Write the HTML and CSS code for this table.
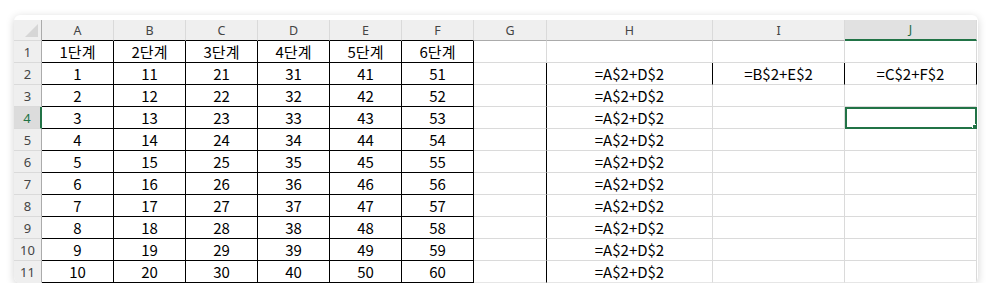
FILE: index.html
```html
<!DOCTYPE html>
<html lang="ko">
<head>
  <meta charset="UTF-8">
  <title>Sheet</title>
  <link rel="stylesheet" href="styles.css">
</head>
<body>
  <div class="sheet">
    <div class="row head">
      <div class="corner"><span class="tri"></span></div>
      <div class="ch bk">A</div>
      <div class="ch bk">B</div>
      <div class="ch bk">C</div>
      <div class="ch bk">D</div>
      <div class="ch bk">E</div>
      <div class="ch bk">F</div>
      <div class="ch">G</div>
      <div class="ch">H</div>
      <div class="ch">I</div>
      <div class="ch sel">J</div>
    </div>

    <div class="row">
      <div class="rh">1</div>
      <div class="c b">1단계</div>
      <div class="c b">2단계</div>
      <div class="c b">3단계</div>
      <div class="c b">4단계</div>
      <div class="c b">5단계</div>
      <div class="c b">6단계</div>
      <div class="c"></div>
      <div class="c"></div>
      <div class="c"></div>
      <div class="c"></div>
    </div>

    <div class="row">
      <div class="rh">2</div>
      <div class="c b">1</div>
      <div class="c b">11</div>
      <div class="c b">21</div>
      <div class="c b">31</div>
      <div class="c b">41</div>
      <div class="c b">51</div>
      <div class="c br"></div>
      <div class="c br">=A$2+D$2</div>
      <div class="c br">=B$2+E$2</div>
      <div class="c br">=C$2+F$2</div>
    </div>

    <div class="row">
      <div class="rh">3</div>
      <div class="c b">2</div>
      <div class="c b">12</div>
      <div class="c b">22</div>
      <div class="c b">32</div>
      <div class="c b">42</div>
      <div class="c b">52</div>
      <div class="c br"></div>
      <div class="c">=A$2+D$2</div>
      <div class="c"></div>
      <div class="c"></div>
    </div>

    <div class="row">
      <div class="rh cur">4</div>
      <div class="c b">3</div>
      <div class="c b">13</div>
      <div class="c b">23</div>
      <div class="c b">33</div>
      <div class="c b">43</div>
      <div class="c b">53</div>
      <div class="c br"></div>
      <div class="c">=A$2+D$2</div>
      <div class="c"></div>
      <div class="c active"></div>
    </div>

    <div class="row">
      <div class="rh">5</div>
      <div class="c b">4</div>
      <div class="c b">14</div>
      <div class="c b">24</div>
      <div class="c b">34</div>
      <div class="c b">44</div>
      <div class="c b">54</div>
      <div class="c br"></div>
      <div class="c">=A$2+D$2</div>
      <div class="c"></div>
      <div class="c"></div>
    </div>

    <div class="row">
      <div class="rh">6</div>
      <div class="c b">5</div>
      <div class="c b">15</div>
      <div class="c b">25</div>
      <div class="c b">35</div>
      <div class="c b">45</div>
      <div class="c b">55</div>
      <div class="c br"></div>
      <div class="c">=A$2+D$2</div>
      <div class="c"></div>
      <div class="c"></div>
    </div>

    <div class="row">
      <div class="rh">7</div>
      <div class="c b">6</div>
      <div class="c b">16</div>
      <div class="c b">26</div>
      <div class="c b">36</div>
      <div class="c b">46</div>
      <div class="c b">56</div>
      <div class="c br"></div>
      <div class="c">=A$2+D$2</div>
      <div class="c"></div>
      <div class="c"></div>
    </div>

    <div class="row">
      <div class="rh">8</div>
      <div class="c b">7</div>
      <div class="c b">17</div>
      <div class="c b">27</div>
      <div class="c b">37</div>
      <div class="c b">47</div>
      <div class="c b">57</div>
      <div class="c br"></div>
      <div class="c">=A$2+D$2</div>
      <div class="c"></div>
      <div class="c"></div>
    </div>

    <div class="row">
      <div class="rh">9</div>
      <div class="c b">8</div>
      <div class="c b">18</div>
      <div class="c b">28</div>
      <div class="c b">38</div>
      <div class="c b">48</div>
      <div class="c b">58</div>
      <div class="c br"></div>
      <div class="c">=A$2+D$2</div>
      <div class="c"></div>
      <div class="c"></div>
    </div>

    <div class="row">
      <div class="rh">10</div>
      <div class="c b">9</div>
      <div class="c b">19</div>
      <div class="c b">29</div>
      <div class="c b">39</div>
      <div class="c b">49</div>
      <div class="c b">59</div>
      <div class="c br"></div>
      <div class="c">=A$2+D$2</div>
      <div class="c"></div>
      <div class="c"></div>
    </div>

    <div class="row last">
      <div class="rh">11</div>
      <div class="c b">10</div>
      <div class="c b">20</div>
      <div class="c b">30</div>
      <div class="c b">40</div>
      <div class="c b">50</div>
      <div class="c b">60</div>
      <div class="c br"></div>
      <div class="c">=A$2+D$2</div>
      <div class="c"></div>
      <div class="c"></div>
    </div>
  </div>
</body>
</html>
```

FILE: styles.css
```css
body {
  margin: 0;
  padding: 15px 0 0 14px;
  background: #fff;
  font-family: "Noto Sans CJK KR", "Noto Sans", sans-serif;
}

.sheet {
  width: 964px;
  padding-top: 5px;
  background: #fff;
  border-radius: 6px;
  overflow: hidden;
  box-shadow: 0 2px 8px rgba(0, 0, 0, 0.18);
}

.row {
  display: grid;
  grid-template-columns: 28px repeat(6, 72px) 73px 166px 132px 132px;
  height: 22px;
}

.row.head {
  height: 21px;
}

.row > div {
  box-sizing: border-box;
  border-right: 1px solid #dadada;
  border-bottom: 1px solid #dadada;
  display: flex;
  align-items: center;
  justify-content: center;
  overflow: hidden;
  white-space: nowrap;
}

/* headers */
.corner,
.ch,
.rh {
  background: #efefef;
  color: #454545;
  font-family: "Noto Sans", sans-serif;
  font-size: 12.5px;
}

.ch {
  border-bottom-color: #ababab !important;
}

.ch.bk {
  border-bottom-color: #000 !important;
}

.ch.sel {
  background: #e1e1e1;
  color: #1e6b41;
  border-bottom: 2px solid #217346 !important;
}

.rh,
.corner {
  border-right-color: #ababab !important;
}

.rh {
  font-size: 13px;
  padding-top: 1px;
}

.rh.cur {
  background: #dcdcdc;
  color: #217346;
  border-right: 2px solid #217346 !important;
}

.last .rh {
  border-bottom-color: #efefef;
}

.corner {
  position: relative;
}

.tri {
  position: absolute;
  right: 3px;
  bottom: 3px;
  width: 0;
  height: 0;
  border-left: 13px solid transparent;
  border-bottom: 13px solid #d6d6d6;
}

/* cells */
.c {
  font-size: 15px;
  color: #000;
}

.c.b {
  border-right-color: #000 !important;
  border-bottom-color: #000 !important;
}

.c.br {
  border-right-color: #000 !important;
}

.last .c:not(.b) {
  border-bottom-color: #e6e6e6;
}

.c.active {
  position: relative;
  outline: 2px solid #217346;
  outline-offset: -2px;
}

.c.active::after {
  content: "";
  position: absolute;
  right: -2px;
  bottom: -3px;
  width: 5px;
  height: 5px;
  background: #217346;
  border: 1px solid #fff;
  border-right: none;
}
```
